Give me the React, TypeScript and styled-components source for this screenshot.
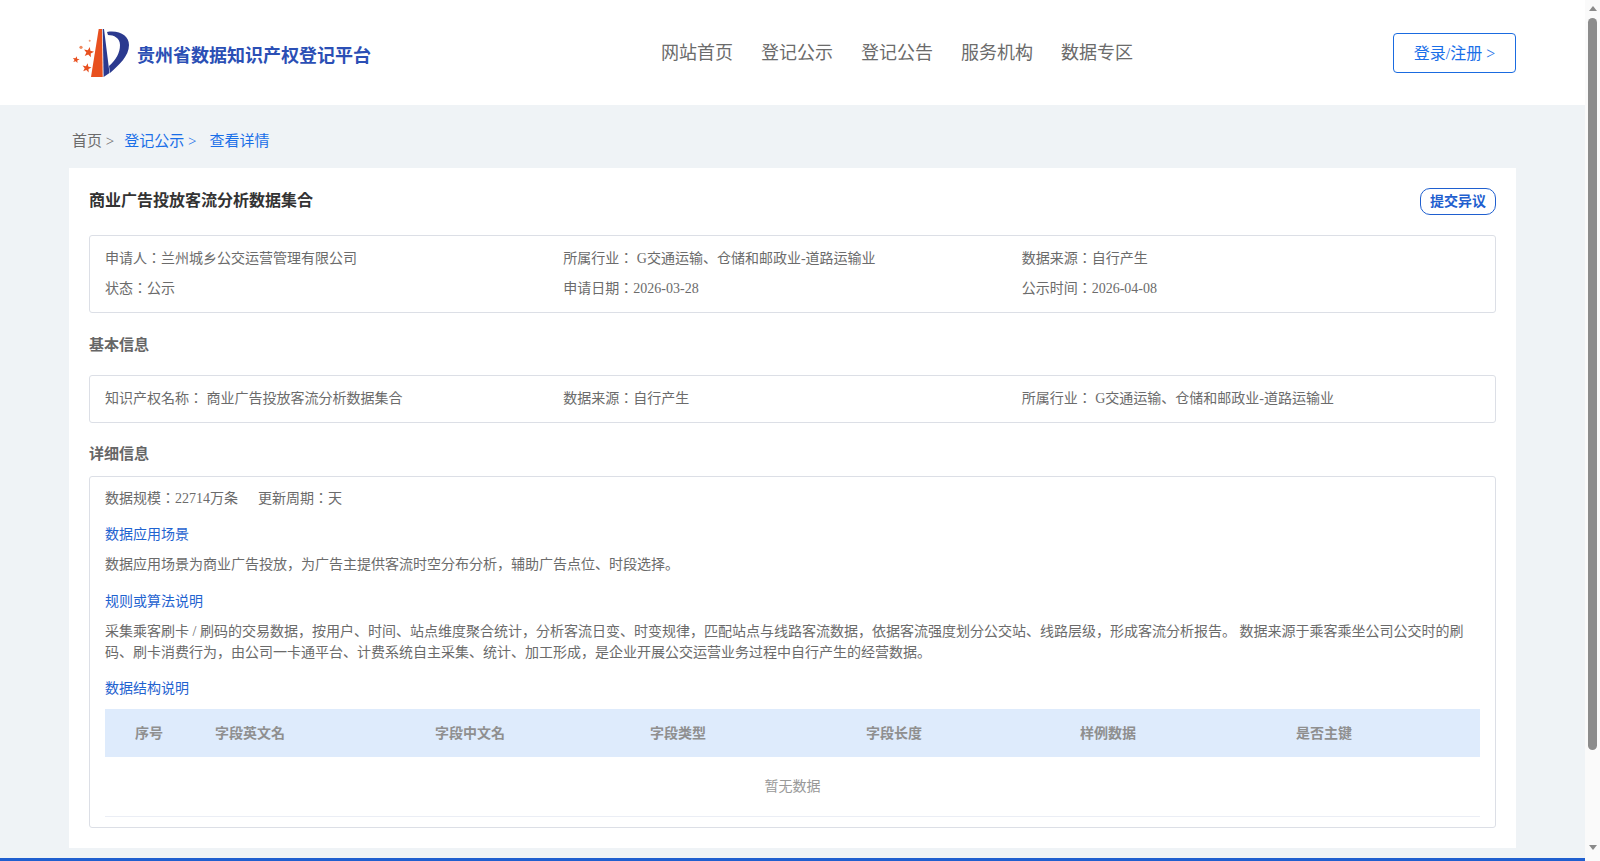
import React from 'react';
import styled, { createGlobalStyle } from 'styled-components';

const GlobalStyle = createGlobalStyle`
  html, body {
    margin: 0;
    height: 100%;
    overflow: hidden;
  }
  body {
    font-family: "Liberation Serif", "Noto Sans CJK JP", serif;
    font-size: 14px;
    color: #6b6b6b;
  }
  #root { height: 100%; }
`;

const Viewport = styled.div`
  display: flex;
  height: 861px;
`;

const Page = styled.div`
  flex: 1;
  min-width: 0;
  background: #eff3f6;
  overflow: hidden;
`;

// scrollbar with arrows, as the browser painted it
const ScrollRail = styled.div`
  width: 15px;
  background: #fafafa;
  display: flex;
  flex-direction: column;
  align-items: center;
  padding-top: 6px;
  box-sizing: border-box;
`;

const Arrow = styled.div<{ $down?: boolean }>`
  width: 0;
  height: 0;
  border-left: 4px solid transparent;
  border-right: 4px solid transparent;
  ${p => p.$down ? 'border-top: 5px solid #8a8a8a;' : 'border-bottom: 5px solid #8a8a8a;'}
`;

const Thumb = styled.div`
  width: 9px;
  height: 732px;
  margin: 7px 0 95px;
  border-radius: 5px;
  background: #8c8c8c;
`;

const Header = styled.header`
  height: 105px;
  background: #fff;
  display: flex;
  align-items: center;
  padding: 0 69px;
`;

const Brand = styled.div`
  display: flex;
  align-items: center;
  width: 305px;
  flex: none;
  margin-left: -3px;
  svg { flex: none; }
`;

const BrandName = styled.span`
  font-size: 18px;
  line-height: 24px;
  font-weight: 700;
  color: #2b4fb5;
  white-space: nowrap;
  margin: 6px 0 0 1px;
`;

const Nav = styled.nav`
  display: flex;
  gap: 28px;
  margin-left: 290px;
  margin-top: -3px;
`;

const NavItem = styled.a`
  font-size: 18px;
  color: #6b6b6b;
  white-space: nowrap;
`;

const LoginButton = styled.button`
  margin-left: auto;
  width: 123px;
  height: 40px;
  background: #fff;
  border: 1px solid #1a6be0;
  border-radius: 4px;
  color: #1a6fe8;
  font: inherit;
  font-size: 16px;
  padding: 0 0 2px;
`;

const Crumbs = styled.div`
  display: flex;
  align-items: center;
  height: 63px;
  padding: 6px 0 0 72px;
  box-sizing: border-box;
  font-size: 15px;
  color: #6b6b6b;
`;

const Crumb = styled.span<{ $link?: boolean; $gap?: number }>`
  color: ${p => (p.$link ? '#1a6fe8' : '#6b6b6b')};
  margin-right: ${p => p.$gap ?? 0}px;
`;

const Card = styled.main`
  margin: 0 69px 10px;
  height: 680px;
  background: #fff;
  padding: 20px;
  box-sizing: border-box;
`;

const TitleRow = styled.div`
  display: flex;
  justify-content: space-between;
  align-items: flex-start;
  height: 47px;
`;

const Title = styled.h1`
  margin: 2px 0 0;
  font-size: 16px;
  line-height: 22px;
  font-weight: 700;
  color: #333;
`;

const ObjectionButton = styled.button`
  width: 76px;
  height: 27px;
  background: #fff;
  border: 1px solid #1f5fcf;
  border-radius: 10px;
  color: #1f5fcf;
  font: inherit;
  font-size: 14px;
  font-weight: 700;
  padding: 0 0 4px;
`;

const Box = styled.section<{ $pad?: number }>`
  border: 1px solid #dcdfe6;
  border-radius: 3px;
  padding: ${p => p.$pad ?? 8}px 15px;
`;

const InfoGrid = styled.div`
  display: grid;
  grid-template-columns: repeat(3, 1fr);
`;

const InfoCell = styled.div`
  height: 30px;
  line-height: 30px;
  white-space: nowrap;
`;

const SectionTitle = styled.h2<{ $height: number; $top?: number; $bottom?: number }>`
  margin: 0;
  height: ${p => p.$height}px;
  box-sizing: border-box;
  padding: ${p => p.$top ?? 0}px 0 ${p => p.$bottom ?? 0}px;
  display: flex;
  align-items: center;
  font-size: 15px;
  font-weight: 700;
  color: #666;
`;

const Stats = styled.div`
  height: 32px;
  line-height: 24px;
  display: flex;
  gap: 20px;
`;

const SubHeading = styled.div`
  height: 32px;
  line-height: 32px;
  color: #1f63d0;
`;

const Paragraph = styled.p<{ $after: number }>`
  margin: 0 0 ${p => p.$after}px;
  line-height: 21px;
  padding-top: 3px;
`;

const TableHead = styled.div`
  display: grid;
  grid-template-columns: 110px 220px 215px 216px 214px 216px 1fr;
  height: 48px;
  box-sizing: border-box;
  padding-bottom: 2px;
  margin-top: 4px;
  align-items: center;
  background: #deebfc;
  font-weight: 700;
  color: #8f8f8f;
`;

const HeadCell = styled.div<{ $first?: boolean }>`
  padding-left: ${p => (p.$first ? 30 : 0)}px;
`;

const EmptyRow = styled.div`
  height: 59px;
  box-sizing: content-box;
  border-bottom: 1px solid #ebeef5;
  display: flex;
  align-items: center;
  justify-content: center;
  padding-bottom: 0;
  line-height: 57px;
  color: #999;
`;

const FooterBar = styled.div`
  height: 3px;
  background: #1f5fcf;
`;

const starPoints = (cx: number, cy: number, r: number) =>
  Array.from({ length: 10 }, (_, i) => {
    const a = (Math.PI / 5) * i - Math.PI / 2 + 0.2;
    const d = i % 2 === 0 ? r : r * 0.42;
    return `${(cx + d * Math.cos(a)).toFixed(1)},${(cy + d * Math.sin(a)).toFixed(1)}`;
  }).join(' ');

const Logo = () => (
  <svg width="70" height="58" viewBox="0 0 70 58">
    {/* orange mast */}
    <path d="M32.7 5 L36 5 L36.7 53 L25 53 Z" fill="#e8501f" />
    {/* navy blade and bowl of the P */}
    <path d="M36.7 5 L38 5 L43.5 49 L37.6 53 Z" fill="#2b3a8f" />
    <path d="M41 8 C54 6 63 12 63 21 C63 32 53 41 44 49 L43 42 C50 36 54 29 54 21 C54 14 48 11 42 11 Z" fill="#2b3a8f" />
    {/* stars */}
    <polygon points={starPoints(22.7, 28.3, 5.4)} fill="#e8501f" />
    <polygon points={starPoints(10, 35.7, 3.6)} fill="#e8501f" />
    <polygon points={starPoints(20.7, 44, 4.8)} fill="#e8501f" />
    <circle cx="15" cy="23.3" r="1.6" fill="#ee8a60" />
    <circle cx="23.7" cy="16.7" r="1" fill="#ee9a78" />
  </svg>
);

const navItems = ['网站首页', '登记公示', '登记公告', '服务机构', '数据专区'];
const columns = ['序号', '字段英文名', '字段中文名', '字段类型', '字段长度', '样例数据', '是否主键'];

export default function App() {
  return (
    <Viewport>
      <GlobalStyle />
      <Page>
        <Header>
          <Brand>
            <Logo />
            <BrandName>贵州省数据知识产权登记平台</BrandName>
          </Brand>
          <Nav>
            {navItems.map(item => <NavItem key={item}>{item}</NavItem>)}
          </Nav>
          <LoginButton>登录/注册 &gt;</LoginButton>
        </Header>

        <Crumbs>
          <Crumb $gap={10}>首页 &gt;</Crumb>
          <Crumb $link $gap={13}>登记公示 &gt;</Crumb>
          <Crumb $link>查看详情</Crumb>
        </Crumbs>

        <Card>
          <TitleRow>
            <Title>商业广告投放客流分析数据集合</Title>
            <ObjectionButton>提交异议</ObjectionButton>
          </TitleRow>

          <Box>
            <InfoGrid>
              <InfoCell>申请人：兰州城乡公交运营管理有限公司</InfoCell>
              <InfoCell>所属行业： G交通运输、仓储和邮政业-道路运输业</InfoCell>
              <InfoCell>数据来源：自行产生</InfoCell>
              <InfoCell>状态：公示</InfoCell>
              <InfoCell>申请日期：2026-03-28</InfoCell>
              <InfoCell>公示时间：2026-04-08</InfoCell>
            </InfoGrid>
          </Box>

          <SectionTitle $height={62} $bottom={2}>基本信息</SectionTitle>
          <Box>
            <InfoGrid>
              <InfoCell>知识产权名称： 商业广告投放客流分析数据集合</InfoCell>
              <InfoCell>数据来源：自行产生</InfoCell>
              <InfoCell>所属行业： G交通运输、仓储和邮政业-道路运输业</InfoCell>
            </InfoGrid>
          </Box>

          <SectionTitle $height={53} $top={6}>详细信息</SectionTitle>
          <Box $pad={10}>
            <Stats>
              <span>数据规模：22714万条</span>
              <span>更新周期：天</span>
            </Stats>
            <SubHeading>数据应用场景</SubHeading>
            <Paragraph $after={11}>数据应用场景为商业广告投放，为广告主提供客流时空分布分析，辅助广告点位、时段选择。</Paragraph>
            <SubHeading>规则或算法说明</SubHeading>
            <Paragraph $after={10}>采集乘客刷卡 / 刷码的交易数据，按用户、时间、站点维度聚合统计，分析客流日变、时变规律，匹配站点与线路客流数据，依据客流强度划分公交站、线路层级，形成客流分析报告。 数据来源于乘客乘坐公司公交时的刷码、刷卡消费行为，由公司一卡通平台、计费系统自主采集、统计、加工形成，是企业开展公交运营业务过程中自行产生的经营数据。</Paragraph>
            <SubHeading>数据结构说明</SubHeading>
            <TableHead>
              {columns.map((col, i) => <HeadCell key={col} $first={i === 0}>{col}</HeadCell>)}
            </TableHead>
            <EmptyRow>暂无数据</EmptyRow>
          </Box>
        </Card>
        <FooterBar />
      </Page>
      <ScrollRail>
        <Arrow />
        <Thumb />
        <Arrow $down />
      </ScrollRail>
    </Viewport>
  );
}
